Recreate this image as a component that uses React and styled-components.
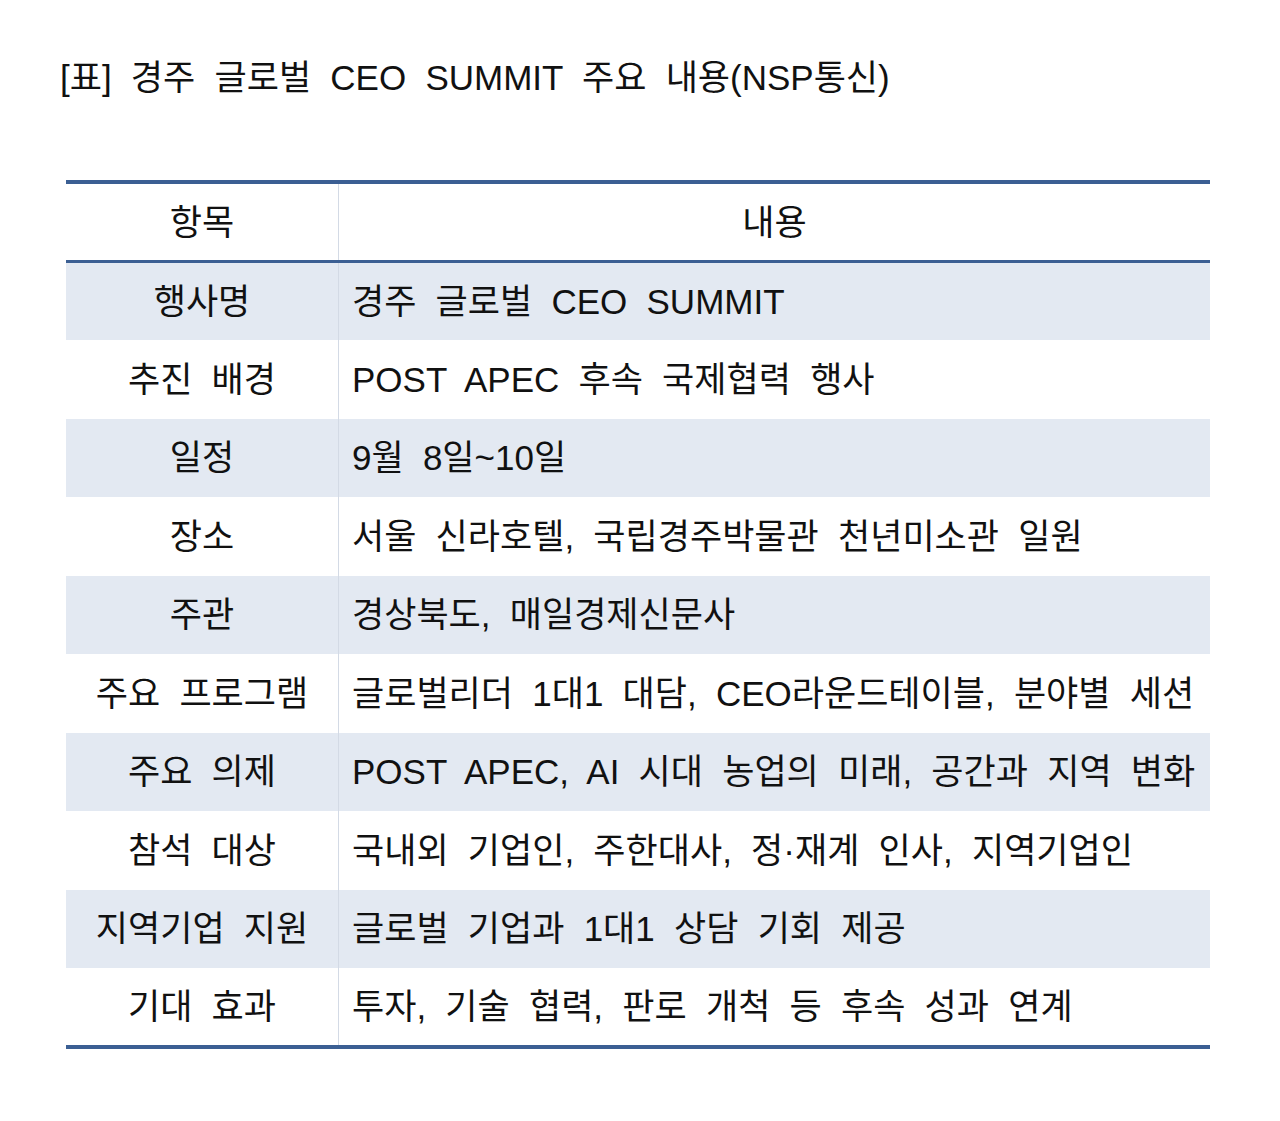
import React from "react";
import styled, { createGlobalStyle } from "styled-components";

const rows = [
  ["행사명", "경주 글로벌 CEO SUMMIT"],
  ["추진 배경", "POST APEC 후속 국제협력 행사"],
  ["일정", "9월 8일~10일"],
  ["장소", "서울 신라호텔, 국립경주박물관 천년미소관 일원"],
  ["주관", "경상북도, 매일경제신문사"],
  ["주요 프로그램", "글로벌리더 1대1 대담, CEO라운드테이블, 분야별 세션"],
  ["주요 의제", "POST APEC, AI 시대 농업의 미래, 공간과 지역 변화"],
  ["참석 대상", "국내외 기업인, 주한대사, 정·재계 인사, 지역기업인"],
  ["지역기업 지원", "글로벌 기업과 1대1 상담 기회 제공"],
  ["기대 효과", "투자, 기술 협력, 판로 개척 등 후속 성과 연계"],
];

const App = () => (
  <>
    <GlobalStyle />
    <Page>
      <Title>[표] 경주 글로벌 CEO SUMMIT 주요 내용(NSP통신)</Title>
      <Table>
        <thead>
          <tr>
            <HeadCell>항목</HeadCell>
            <HeadCell>내용</HeadCell>
          </tr>
        </thead>
        <tbody>
          {rows.map(([label, value], i) => (
            <Row key={label} $shaded={i % 2 === 0}>
              <LabelCell>{label}</LabelCell>
              <ValueCell>{value}</ValueCell>
            </Row>
          ))}
        </tbody>
      </Table>
    </Page>
  </>
);

export default App;

const GlobalStyle = createGlobalStyle`
  html, body {
    margin: 0;
    padding: 0;
    background: #ffffff;
  }
  body {
    font-family: "Liberation Sans", "Noto Sans CJK KR", sans-serif;
    color: #111;
  }
`;

const Page = styled.div`
  width: 1280px;
  height: 1121px;
  padding: 51px 0 0 60px;
  box-sizing: border-box;
`;

const Title = styled.h1`
  margin: 0 0 75px 0;
  font-size: 35px;
  font-weight: 400;
  line-height: 54px;
  word-spacing: 9.5px;
  color: #111;
`;

const Table = styled.table`
  margin-left: 6px;
  width: 1144px;
  border-collapse: collapse;
  border-top: 4px solid #3b5f93;
  border-bottom: 4px solid #3b5f93;
  font-size: 35px;
  line-height: 1;
  word-spacing: 9.5px;
`;

const HeadCell = styled.th`
  height: 76px;
  font-weight: 400;
  text-align: center;
  border-bottom: 3px solid #3b5f93;
  padding: 0;
  &:first-child {
    width: 272px;
    border-right: 1px solid #d3dae5;
  }
`;

const Row = styled.tr`
  height: 78.5px;
  background: ${({ $shaded }) => ($shaded ? "#e3e9f2" : "#ffffff")};
`;

const LabelCell = styled.td`
  text-align: center;
  padding: 0;
  border-right: 1px solid #d3dae5;
`;

const ValueCell = styled.td`
  text-align: left;
  padding: 0 0 0 13px;
`;
